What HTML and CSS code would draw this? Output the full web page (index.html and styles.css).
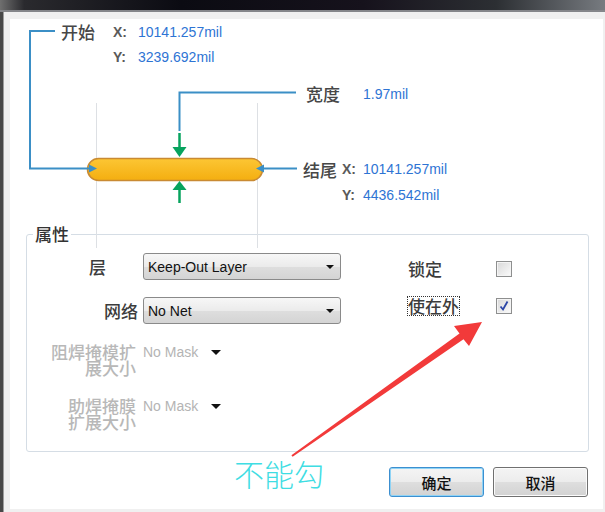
FILE: index.html
```html
<!DOCTYPE html>
<html lang="zh">
  <head>
    <meta charset="UTF-8" />
    <meta name="viewport" content="width=device-width, initial-scale=1.0" />
    <title>线属性</title>
    <link rel="stylesheet" href="styles.css">
  </head>
  <body>
    <div class="titlebar"></div>
    <div class="frame">
      <div class="dialog">
        <div class="panel">
          <div class="diagram">
            <svg class="diagramArt" width="593" height="206" viewBox="10 19 593 206">
              <defs>
                <linearGradient id="pillFill" x1="0" y1="0" x2="0" y2="1">
                  <stop offset="0" stop-color="#fcc634" />
                  <stop offset="1" stop-color="#f4ae10" />
                </linearGradient>
              </defs>
              <line x1="96.5" y1="103" x2="96.5" y2="248" stroke="#dde0e4" />
              <line x1="257.5" y1="103" x2="257.5" y2="248" stroke="#dde0e4" />
              <rect x="87.5" y="158.5" width="175" height="22" rx="11" fill="url(#pillFill)" stroke="#c98a33" stroke-width="1.5" />
              <g fill="none" stroke="#3b8fc6" stroke-width="2">
                <path d="M55 31 H30 V168.5 H90" />
                <path d="M297 168.5 H263" />
                <path d="M296 92.5 H179.5 V131" />
              </g>
              <g fill="#3b8fc6">
                <polygon points="97,168.5 89,164.5 89,172.5" />
                <polygon points="256,168.5 264,164.5 264,172.5" />
              </g>
              <g fill="#07a35e" stroke="#07a35e">
                <line x1="179.5" y1="133" x2="179.5" y2="148" stroke-width="2.5" />
                <polygon points="172.5,147 186.5,147 179.5,157" stroke-width="0" />
                <polygon points="179.5,181 172.5,190 186.5,190" stroke-width="0" />
                <line x1="179.5" y1="189" x2="179.5" y2="203" stroke-width="2.5" />
              </g>
            </svg>

            <div class="coords coordsStart">
              <span class="name">开始</span><span class="key">X:</span><span class="val">10141.257mil</span>
              <span></span><span class="key">Y:</span><span class="val">3239.692mil</span>
            </div>
            <div class="coords coordsWidth">
              <span class="name">宽度</span><span class="val">1.97mil</span>
            </div>
            <div class="coords coordsEnd">
              <span class="name">结尾</span><span class="key">X:</span><span class="val">10141.257mil</span>
              <span></span><span class="key">Y:</span><span class="val">4436.542mil</span>
            </div>
          </div>

          <fieldset class="props">
            <legend>属性</legend>
            <div class="propsBody">
              <div class="propsLeft">
                <label class="fieldLabel layerLabel">层</label>
                <div class="combo"><span>Keep-Out Layer</span><i class="caret"></i></div>

                <label class="fieldLabel">网络</label>
                <div class="combo"><span>No Net</span><i class="caret"></i></div>

                <label class="fieldLabel disabled">阻焊掩模扩<br />展大小</label>
                <div class="mask"><span>No Mask</span><i class="caret caretWide"></i></div>

                <label class="fieldLabel disabled">助焊掩膜<br />扩展大小</label>
                <div class="mask"><span>No Mask</span><i class="caret caretWide"></i></div>
              </div>

              <div class="propsRight">
                <span class="checkLabel">锁定</span>
                <span class="check"></span>
                <span class="checkLabel focused">使在外</span>
                <span class="check">
                  <svg width="14" height="14" viewBox="0 0 14 14">
                    <path d="M3.5 7.5 L6 10.5 L10.5 2.5" fill="none" stroke="#2b45a6" stroke-width="1.8" />
                  </svg>
                </span>
              </div>
            </div>
          </fieldset>

          <div class="buttonRow">
            <button class="btn btnDefault">确定</button>
            <button class="btn">取消</button>
          </div>
        </div>
      </div>
    </div>

    <svg class="noteArrow" width="605" height="512" viewBox="0 0 605 512">
      <polygon points="482,322 454,326 459.5,333.4 291.4,455.2 292.6,456.8 463.5,339.2 469,346" fill="#f23a3a" />
    </svg>
    <div class="noteText">不能勾</div>
  </body>
</html>
```

FILE: styles.css
```css
body {
  margin: 0;
  position: relative;
  width: 605px;
  height: 512px;
  overflow: hidden;
  background: #fff;
  font-family: "Liberation Sans", "Noto Sans CJK SC", sans-serif;
  font-size: 14px;
}
.titlebar {
  height: 10px;
  background: linear-gradient(90deg, #6f6f6f 0, #2a2a2e 4%, #0b0b12 30%, #16121c 60%, #2c2f33 82%, #777b80 100%);
  border-bottom: 2px solid #85868a;
}
.frame {
  display: flex;
  height: 500px;
  border-left: 3px solid #484848;
}
.dialog {
  flex: 1;
  display: flex;
  background: #f0f0f0;
  border-left: 1px solid #9d9d9d;
  padding: 7px 2px 3px 6px;
}
.panel {
  flex: 1;
  background: #fff;
  position: relative;
}
.diagram {
  position: relative;
  height: 206px;
}
.diagramArt {
  position: absolute;
  left: 0;
  top: 0;
  overflow: visible;
}
.coords {
  position: absolute;
  display: grid;
  grid-auto-rows: 25px;
  align-items: center;
  white-space: nowrap;
}
.coordsStart {
  left: 51px;
  top: 0;
  grid-template-columns: 52px 25px auto;
}
.coordsWidth {
  left: 296px;
  top: 62px;
  grid-template-columns: 57px auto;
}
.coordsEnd {
  left: 293px;
  top: 137px;
  grid-auto-rows: 26px;
  grid-template-columns: 39px 21px auto;
}
.name {
  font-family: "Noto Sans CJK SC", sans-serif;
  font-size: 17px;
  font-weight: 500;
  color: #474747;
}
.key {
  font-weight: bold;
  color: #5a5a5a;
}
.val {
  color: #2e74d4;
}
.props {
  margin: 0 0 0 16px;
  width: 563px;
  height: 227px;
  box-sizing: border-box;
  border: 1px solid #d5dde5;
  border-radius: 3px;
  padding: 0 6px;
  min-width: 0;
}
.props legend {
  padding: 0 2px;
  font-family: "Noto Sans CJK SC", sans-serif;
  font-size: 17px;
  font-weight: 500;
  line-height: 18px;
  color: #333;
}
.propsBody {
  display: flex;
  align-items: flex-start;
}
.propsLeft {
  display: grid;
  grid-template-columns: 105px 198px;
  grid-template-rows: 27px 44px 52px 54px;
  column-gap: 5px;
  align-items: end;
  margin-top: 10px;
}
.fieldLabel {
  justify-self: end;
  text-align: right;
  font-family: "Noto Sans CJK SC", sans-serif;
  font-size: 17px;
  font-weight: 500;
  line-height: 27px;
  color: #3c3c3c;
}
.layerLabel {
  margin-right: 32px;
}
.fieldLabel.disabled {
  margin-right: 2px;
  line-height: 16px;
  color: #b8b8b8;
}
.combo {
  display: flex;
  justify-content: space-between;
  align-items: center;
  height: 27px;
  box-sizing: border-box;
  padding: 0 6px 0 4px;
  border: 1px solid #8a8a8a;
  border-radius: 3px;
  background: linear-gradient(#f7f7f7, #ebebeb 50%, #dedede 51%, #d4d4d4);
  color: #111;
}
.caret {
  width: 0;
  height: 0;
  border-left: 4px solid transparent;
  border-right: 4px solid transparent;
  border-top: 4px solid #111;
}
.caretWide {
  border-left-width: 5px;
  border-right-width: 5px;
  border-top-width: 5px;
  margin-left: 13px;
}
.mask {
  display: flex;
  align-items: center;
  height: 32px;
  align-self: end;
  line-height: 16px;
  color: #b4b4b4;
}
.mask span {
  align-self: flex-start;
}
.mask .caret {
  align-self: flex-start;
  margin-top: 6px;
}
.propsRight {
  display: grid;
  grid-template-columns: 88px 16px;
  grid-template-rows: 20px 20px;
  row-gap: 17px;
  align-items: center;
  margin: 16px 0 0 67px;
}
.checkLabel {
  justify-self: start;
  font-family: "Noto Sans CJK SC", sans-serif;
  font-size: 17px;
  font-weight: 500;
  line-height: 18px;
  color: #3c3c3c;
}
.checkLabel.focused {
  border: 1px dotted #333;
  margin-left: -1px;
}
.check {
  display: block;
  width: 14px;
  height: 14px;
  border: 1px solid #8e8f8f;
  background: linear-gradient(135deg, #d8d8d8, #fbfbfb);
  box-shadow: inset 0 0 0 1px #f4f4f4;
}
.check svg {
  display: block;
}
.buttonRow {
  display: flex;
  justify-content: flex-end;
  gap: 9px;
  margin-top: 15px;
  padding-right: 15px;
}
.btn {
  width: 95px;
  height: 30px;
  border: 1px solid #707070;
  border-radius: 3px;
  background: linear-gradient(#f4f4f4, #ececec 50%, #dedede 51%, #d2d2d2);
  box-shadow: inset 0 0 0 1px #fbfbfb;
  font-family: "Noto Sans CJK SC", sans-serif;
  font-size: 15px;
  font-weight: 500;
  color: #111;
  padding: 0;
}
.btnDefault {
  border-color: #3c8fd0;
  box-shadow: inset 0 0 0 1px #8fd3f5;
}
.noteArrow {
  position: absolute;
  left: 0;
  top: 0;
  pointer-events: none;
}
.noteText {
  position: absolute;
  left: 234px;
  top: 456px;
  font-family: "Noto Sans CJK SC", sans-serif;
  font-weight: 300;
  font-size: 30px;
  line-height: 34px;
  color: #3fdde3;
}
```
